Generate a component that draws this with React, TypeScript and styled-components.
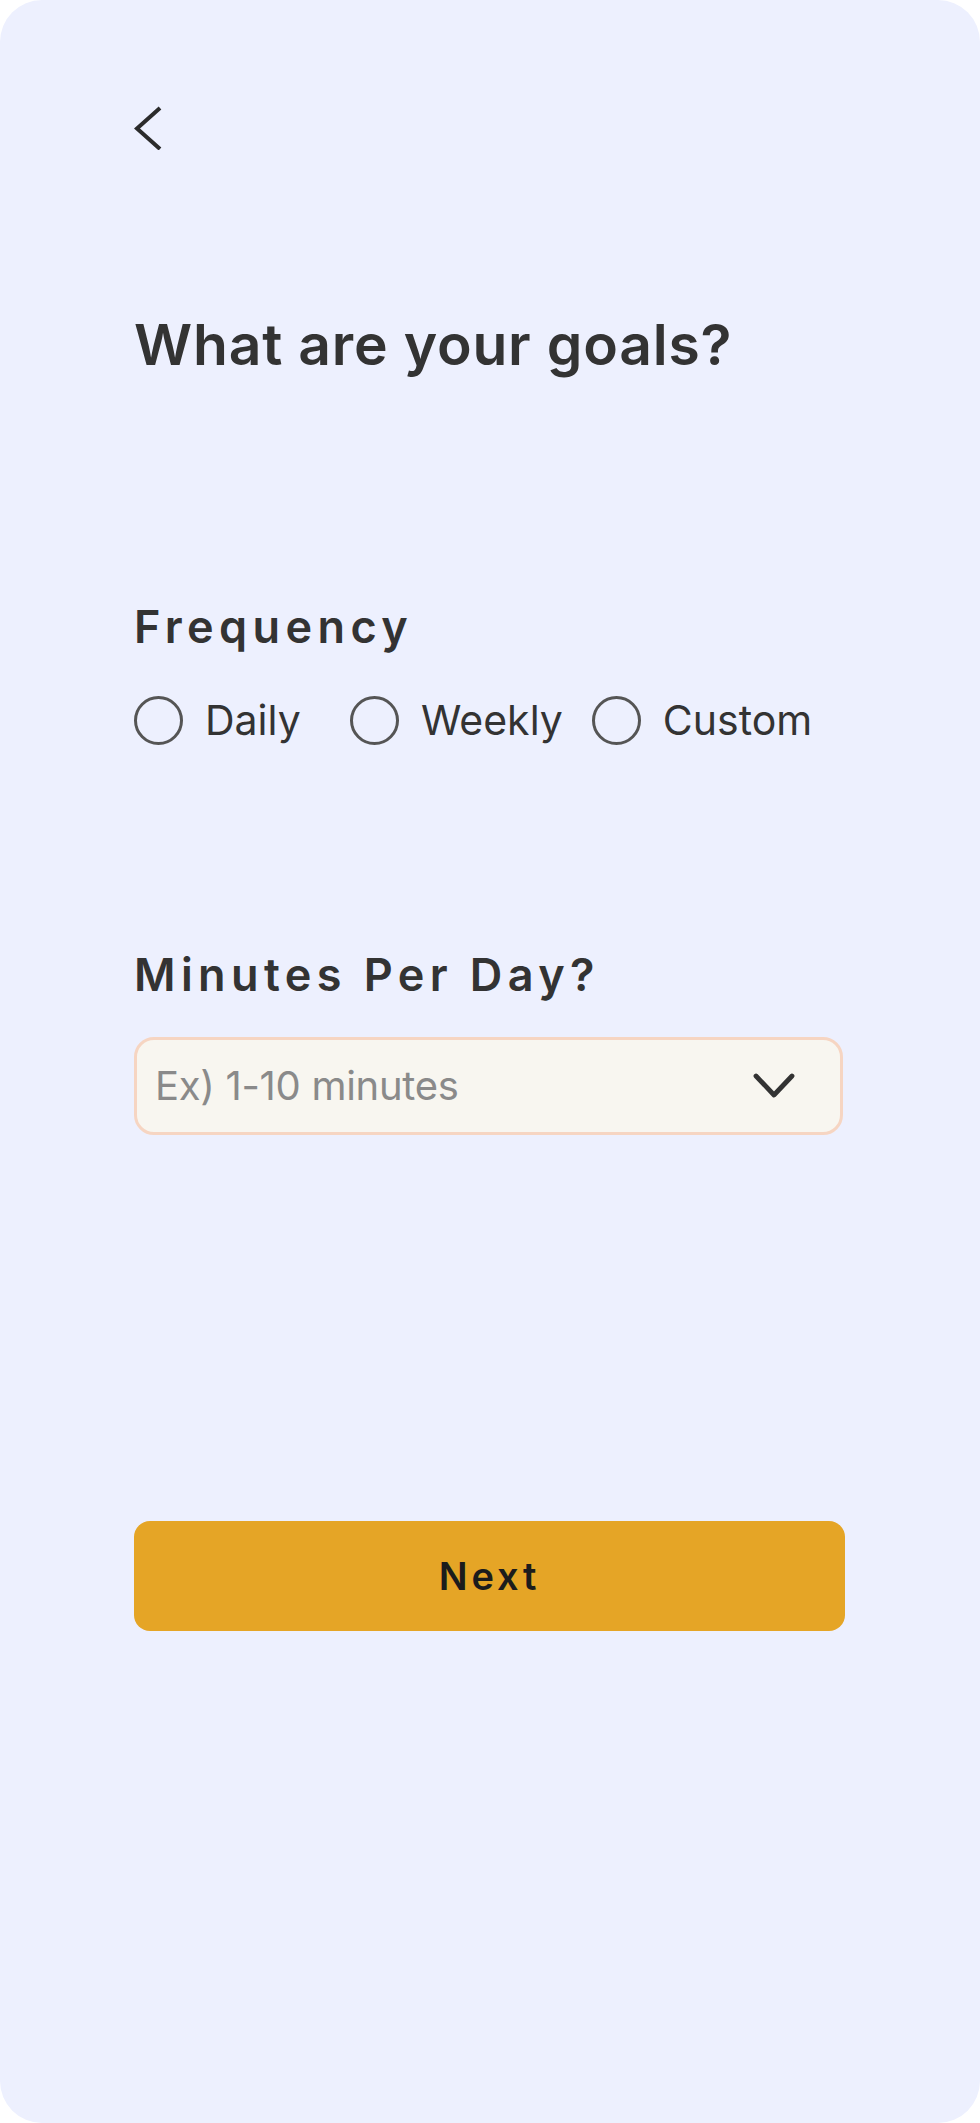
import styled, { createGlobalStyle } from 'styled-components';

const GlobalStyle = createGlobalStyle`
  html, body {
    margin: 0;
    padding: 0;
    background: #ffffff;
  }
  * {
    box-sizing: border-box;
  }
`;

const Screen = styled.div`
  width: 980px;
  height: 2123px;
  background: #edf0fe;
  border-radius: 42px;
  padding: 106px 135px 0 134px;
  display: flex;
  flex-direction: column;
  font-family: Inter, 'Noto Sans', sans-serif;
  color: #333333;
`;

const BackButton = styled.button`
  width: 30px;
  height: 44px;
  padding: 0;
  border: none;
  background: none;
  display: flex;
  cursor: pointer;
`;

const Title = styled.h1`
  margin: 166px 0 0;
  font-size: 57px;
  line-height: 1;
  font-weight: 600;
  letter-spacing: 0.8px;
  color: #333333;
`;

const SectionLabel = styled.h2<{ $gap: number }>`
  margin: ${(p) => p.$gap}px 0 0;
  font-size: 45px;
  line-height: 1;
  font-weight: 600;
  letter-spacing: 0.12em;
  color: #333333;
`;

const RadioRow = styled.div`
  display: flex;
  align-items: center;
  gap: 29px;
  margin-top: 47px;
`;

const RadioOption = styled.label`
  display: flex;
  align-items: center;
  gap: 22px;
  min-width: 187px;
  font-size: 41px;
  line-height: 1;
  color: #333333;
  cursor: pointer;
`;

const RadioCircle = styled.span`
  width: 49px;
  height: 49px;
  border-radius: 50%;
  border: 3.8px solid #555555;
  flex-shrink: 0;
`;

const SelectBox = styled.div`
  margin-top: 40px;
  width: 709px;
  height: 98px;
  border: 3px solid #f6d5c2;
  border-radius: 20px;
  background: #f8f6f0;
  display: flex;
  align-items: center;
  justify-content: space-between;
  padding: 0 45px 0 18px;
`;

const Placeholder = styled.span`
  font-size: 40px;
  line-height: 1;
  letter-spacing: -0.3px;
  color: #8a8a8a;
`;

const NextButton = styled.button`
  margin-top: 386px;
  width: 711px;
  height: 110px;
  border: none;
  border-radius: 16px;
  background: #e5a526;
  font-family: Inter, 'Noto Sans', sans-serif;
  font-size: 38px;
  font-weight: 600;
  letter-spacing: 0.1em;
  color: #1c1c1c;
  cursor: pointer;
`;

const options = ['Daily', 'Weekly', 'Custom'];

function App() {
  return (
    <>
      <GlobalStyle />
      <Screen>
        <BackButton aria-label='Back'>
          <svg width='30' height='44' viewBox='0 0 30 44' fill='none'>
            <path d='M26 2 L3 22.5 L26 43' stroke='#2b2b2b' strokeWidth='4' />
          </svg>
        </BackButton>

        <Title>What are your goals?</Title>

        <SectionLabel $gap={231}>Frequency</SectionLabel>
        <RadioRow>
          {options.map((option) => (
            <RadioOption key={option}>
              <RadioCircle />
              {option}
            </RadioOption>
          ))}
        </RadioRow>

        <SectionLabel $gap={207}>Minutes Per Day?</SectionLabel>
        <SelectBox>
          <Placeholder>Ex) 1-10 minutes</Placeholder>
          <svg width='42' height='26' viewBox='0 0 42 26' fill='none'>
            <path d='M3 3 L21 22 L39 3' stroke='#333333' strokeWidth='4.8' strokeLinecap='round' strokeLinejoin='round' />
          </svg>
        </SelectBox>

        <NextButton>Next</NextButton>
      </Screen>
    </>
  );
}

export default App;
